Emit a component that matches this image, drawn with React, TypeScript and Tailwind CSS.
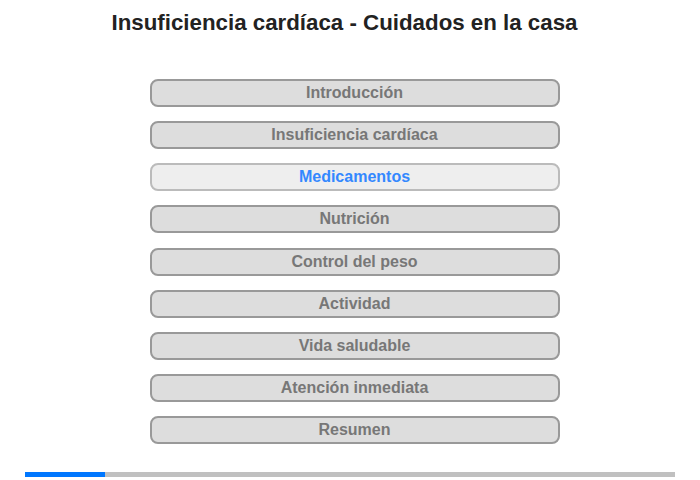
const items = [
  "Introducción",
  "Insuficiencia cardíaca",
  "Medicamentos",
  "Nutrición",
  "Control del peso",
  "Actividad",
  "Vida saludable",
  "Atención inmediata",
  "Resumen",
];

const active = 2;

export default function App() {
  return (
    <div className="w-[700px] h-[480px] bg-white font-['Liberation_Sans',Arial,sans-serif] flex flex-col items-center">
      <h1 className="mt-[9px] pr-[11px] h-[28px] leading-[28px] text-[22.3px] font-bold text-[#222]">
        Insuficiencia cardíaca - Cuidados en la casa
      </h1>
      <div className="mt-[42px] ml-[9px] flex flex-col gap-[14.13px]">
        {items.map((label, i) => (
          <button
            key={label}
            className={
              i === active
                ? "w-[410px] h-[28px] rounded-[8px] border-2 border-[#bbb] bg-[#eee] text-[16px] font-bold text-[#3388ff] leading-none"
                : "w-[410px] h-[28px] rounded-[8px] border-2 border-[#999] bg-[#ddd] text-[16px] font-bold text-[#777] leading-none"
            }
          >
            {label}
          </button>
        ))}
      </div>
      <div className="mt-[28px] w-[650px] h-[5px] bg-[#c0c0c0] flex">
        <div className="w-[80px] h-full bg-[#0077ff]" />
      </div>
    </div>
  );
}
